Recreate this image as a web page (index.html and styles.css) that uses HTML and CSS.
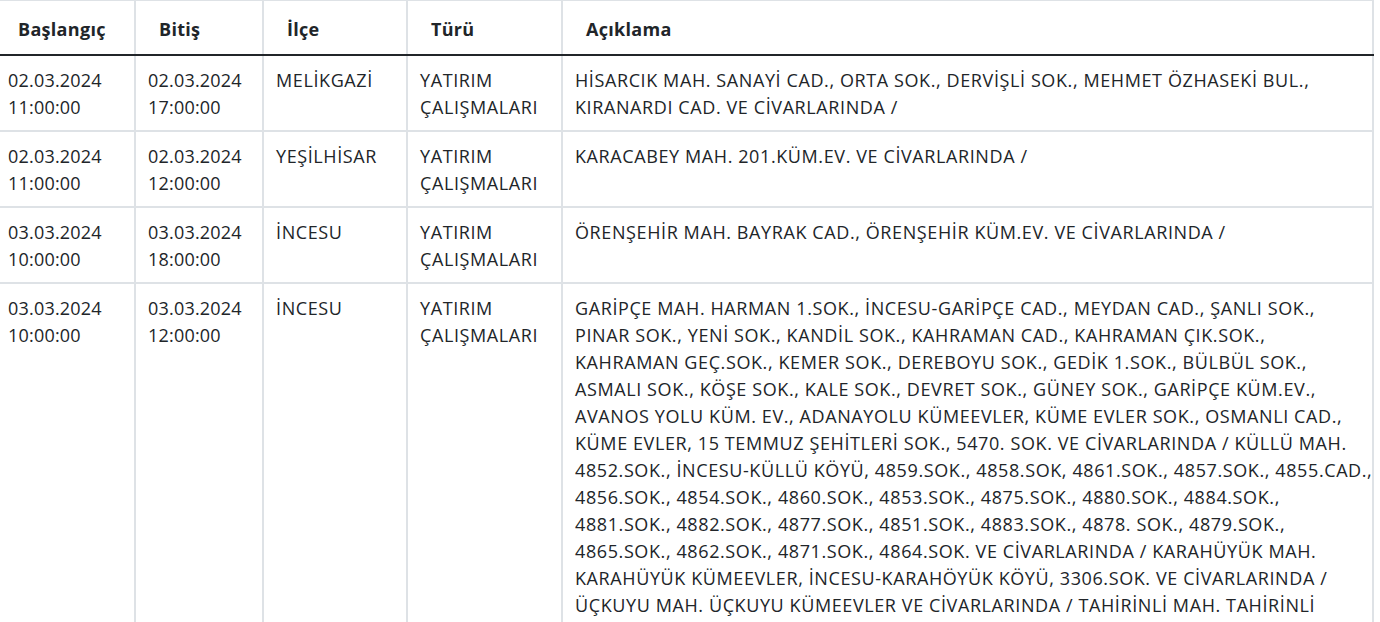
FILE: index.html
```html
<!DOCTYPE html>
<html lang="tr">
<head>
<meta charset="utf-8">
<title>Kesintiler</title>
<link rel="stylesheet" href="styles.css">
</head>
<body>
<table class="outages">
  <colgroup>
    <col class="c-start">
    <col class="c-end">
    <col class="c-district">
    <col class="c-type">
    <col class="c-desc">
  </colgroup>
  <thead>
    <tr>
      <th>Başlangıç</th>
      <th>Bitiş</th>
      <th>İlçe</th>
      <th>Türü</th>
      <th>Açıklama</th>
    </tr>
  </thead>
  <tbody>
    <tr>
      <td class="date">02.03.2024 11:00:00</td>
      <td class="date">02.03.2024 17:00:00</td>
      <td class="caps">MELİKGAZİ</td>
      <td class="caps">YATIRIM ÇALIŞMALARI</td>
      <td class="caps desc">HİSARCIK MAH. SANAYİ CAD., ORTA SOK., DERVİŞLİ SOK., MEHMET ÖZHASEKİ BUL.,<br>KIRANARDI CAD. VE CİVARLARINDA /</td>
    </tr>
    <tr>
      <td class="date">02.03.2024 11:00:00</td>
      <td class="date">02.03.2024 12:00:00</td>
      <td class="caps">YEŞİLHİSAR</td>
      <td class="caps">YATIRIM ÇALIŞMALARI</td>
      <td class="caps desc">KARACABEY MAH. 201.KÜM.EV. VE CİVARLARINDA /</td>
    </tr>
    <tr>
      <td class="date">03.03.2024 10:00:00</td>
      <td class="date">03.03.2024 18:00:00</td>
      <td class="caps">İNCESU</td>
      <td class="caps">YATIRIM ÇALIŞMALARI</td>
      <td class="caps desc">ÖRENŞEHİR MAH. BAYRAK CAD., ÖRENŞEHİR KÜM.EV. VE CİVARLARINDA /</td>
    </tr>
    <tr>
      <td class="date">03.03.2024 10:00:00</td>
      <td class="date">03.03.2024 12:00:00</td>
      <td class="caps">İNCESU</td>
      <td class="caps">YATIRIM ÇALIŞMALARI</td>
      <td class="caps desc">GARİPÇE MAH. HARMAN 1.SOK., İNCESU-GARİPÇE CAD., MEYDAN CAD., ŞANLI SOK.,<br>PINAR SOK., YENİ SOK., KANDİL SOK., KAHRAMAN CAD., KAHRAMAN ÇIK.SOK.,<br>KAHRAMAN GEÇ.SOK., KEMER SOK., DEREBOYU SOK., GEDİK 1.SOK., BÜLBÜL SOK.,<br>ASMALI SOK., KÖŞE SOK., KALE SOK., DEVRET SOK., GÜNEY SOK., GARİPÇE KÜM.EV.,<br>AVANOS YOLU KÜM. EV., ADANAYOLU KÜMEEVLER, KÜME EVLER SOK., OSMANLI CAD.,<br>KÜME EVLER, 15 TEMMUZ ŞEHİTLERİ SOK., 5470. SOK. VE CİVARLARINDA / KÜLLÜ MAH.<br>4852.SOK., İNCESU-KÜLLÜ KÖYÜ, 4859.SOK., 4858.SOK, 4861.SOK., 4857.SOK., 4855.CAD.,<br>4856.SOK., 4854.SOK., 4860.SOK., 4853.SOK., 4875.SOK., 4880.SOK., 4884.SOK.,<br>4881.SOK., 4882.SOK., 4877.SOK., 4851.SOK., 4883.SOK., 4878. SOK., 4879.SOK.,<br>4865.SOK., 4862.SOK., 4871.SOK., 4864.SOK. VE CİVARLARINDA / KARAHÜYÜK MAH.<br>KARAHÜYÜK KÜMEEVLER, İNCESU-KARAHÖYÜK KÖYÜ, 3306.SOK. VE CİVARLARINDA /<br>ÜÇKUYU MAH. ÜÇKUYU KÜMEEVLER VE CİVARLARINDA / TAHİRİNLİ MAH. TAHİRİNLİ<br>KÜMEEVLER VE CİVARLARINDA /</td>
    </tr>
  </tbody>
</table>
</body>
</html>
```

FILE: styles.css
```css
html, body {
  margin: 0;
  padding: 0;
  background: #fff;
}

body {
  font-family: "Open Sans", "Noto Sans", sans-serif;
  font-size: 18px;
  line-height: 27px;
  color: #212529;
  overflow: hidden;
}

.outages {
  border-collapse: collapse;
  table-layout: fixed;
  width: 1380px;
  margin: -1px 0 0 -8px;
}

.c-start { width: 142px; }
.c-end { width: 128px; }
.c-district { width: 144px; }
.c-type { width: 155px; }
.c-desc { width: 811px; }

.outages th,
.outages td {
  border: 2px solid #dee2e6;
  vertical-align: top;
  text-align: left;
}

.outages th {
  font-weight: 700;
  letter-spacing: 0.3px;
  padding: 15px 14px 11px 23px;
  border-bottom: 2px solid #212529;
}

.outages th:first-child {
  padding-left: 24px;
}

.outages td {
  padding: 11px 12px 9px;
}

.outages td:first-child {
  padding-left: 14px;
}

.outages td.date {
  letter-spacing: 0.2px;
}

.outages td.caps {
  letter-spacing: 0.6px;
}

.outages td.desc {
  white-space: nowrap;
  overflow: hidden;
}
```
